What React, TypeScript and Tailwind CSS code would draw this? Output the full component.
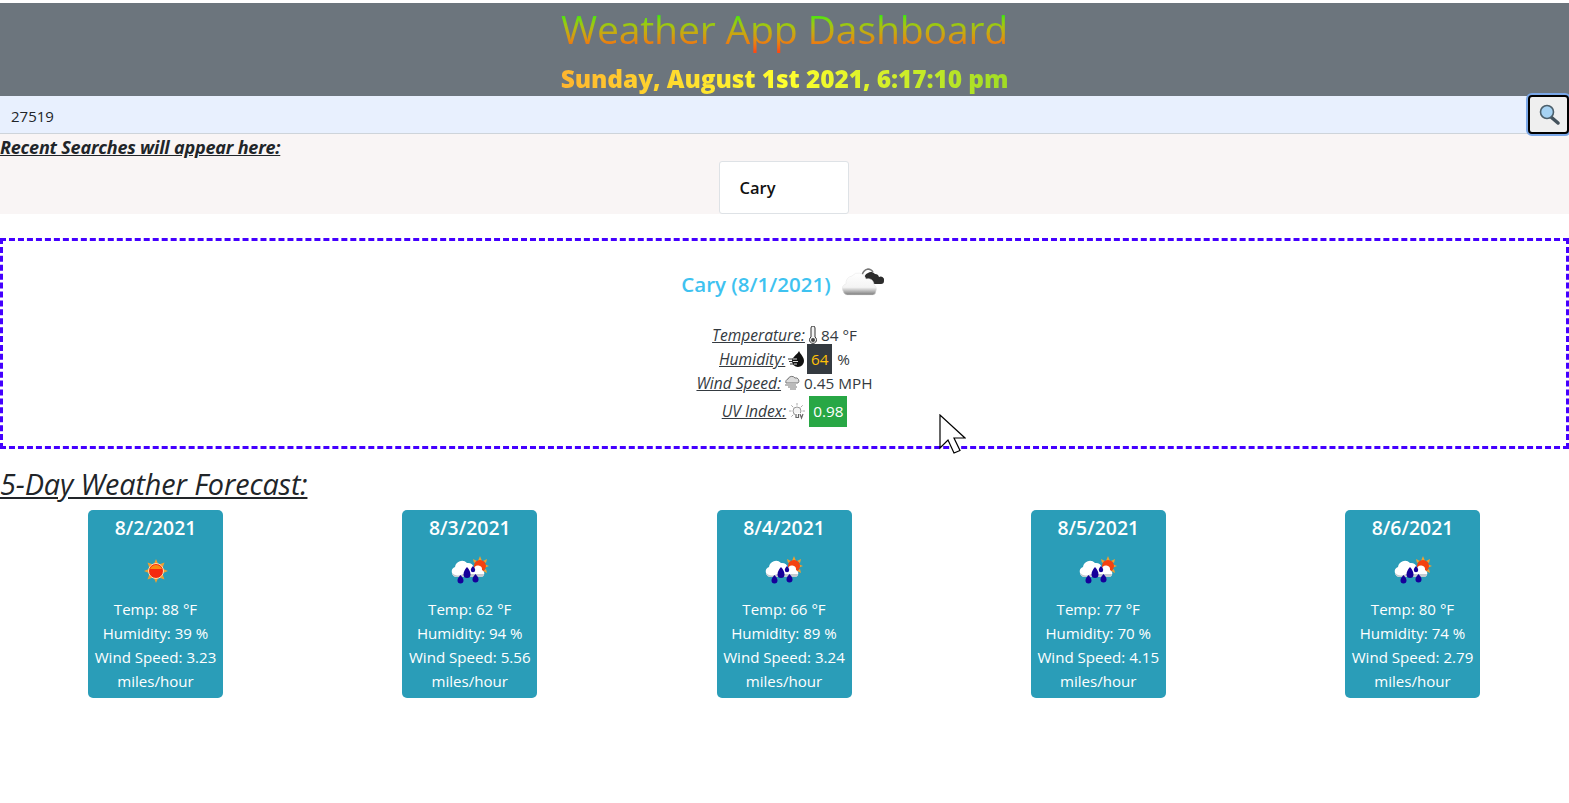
import React from 'react';

const SunIcon = () => (
    <svg width="26" height="26" viewBox="0 0 26 26">
        <g fill="#f0a030">
            <polygon points="13,1 15.5,7 10.5,7" />
            <polygon points="13,25 15.5,19 10.5,19" />
            <polygon points="1,13 7,10.5 7,15.5" />
            <polygon points="25,13 19,10.5 19,15.5" />
            <polygon points="4.5,4.5 10,6.5 6.5,10" />
            <polygon points="21.5,4.5 16,6.5 19.5,10" />
            <polygon points="4.5,21.5 10,19.5 6.5,16" />
            <polygon points="21.5,21.5 16,19.5 19.5,16" />
        </g>
        <circle cx="13" cy="13" r="7.5" fill="#f5290f" stroke="#ffe0b0" strokeWidth="1" />
        <path d="M7 11a6.5 6.5 0 0 1 12 0z" fill="#f98a12" />
    </svg>
);

const RainSunIcon = () => (
    <svg width="38" height="30" viewBox="0 0 38 30">
        <g fill="#f0a030">
            <polygon points="29,0 31,5 27,5" />
            <polygon points="38,10 33,12 33,8" />
            <polygon points="22,3 26,5 23,7" />
            <polygon points="36,3 32,5 35,7" />
            <polygon points="36,17 32,15 35,13" />
        </g>
        <circle cx="29" cy="10" r="6" fill="#f4410f" />
        <path d="M1 17a5 5 0 0 1 3-6 7 7 0 0 1 12-4 6 6 0 0 1 7 6 4 4 0 0 1 8 1 3.500 3.500 0 0 1 1 6 3 3 0 0 1-2 1H6a5 5 0 0 1-5-4z" fill="#ffffff" />
        <path d="M1 17a5 5 0 0 0 5 4h25a3 3 0 0 0 2-3H12a9 9 0 0 1-11-1z" fill="#c4cacf" />
        <g fill="#16009a">
            <path d="M16 11c2.500 3 3.500 5 3.500 7.500a3.500 3.500 0 0 1-7 0c0-2.500 1-4.500 3.500-7.500z" />
            <path d="M9.500 19c1.800 2 3 3.500 3 5.500a3 3 0 0 1-6 0c0-2 1.200-3.500 3-5.500z" />
            <path d="M24.500 18c1.800 2 3 3.500 3 5.500a3 3 0 0 1-6 0c0-2 1.200-3.500 3-5.500z" />
            <path d="M22 10c1.200 1.500 2.200 2.700 2.200 4a2.200 2.200 0 0 1-4.400 0c0-1.300 1-2.500 2.200-4z" />
        </g>
    </svg>
);

const CloudIcon = () => (
    <svg width="44" height="29" viewBox="0 0 44 29">
        <defs>
            <linearGradient id="cloudFill" x1="0" y1="0" x2="0" y2="1">
                <stop offset="0" stopColor="#ffffff" />
                <stop offset="0.65" stopColor="#f4f4f4" />
                <stop offset="1" stopColor="#7a7a7a" />
            </linearGradient>
        </defs>
        <path d="M20 8a8 8 0 0 1 6-7 6 6 0 0 1 5 3" fill="none" stroke="#777" strokeWidth="1.500" />
        <path d="M23 12a5 5 0 0 1 3-7 5 5 0 0 1 7 1 4 4 0 0 1 4 3 3.500 3.500 0 0 1 5 4 3 3 0 0 1-3 3H30a7 7 0 0 1-7-4z" fill="#2d2d2d" />
        <path d="M1 23a4.500 4.500 0 0 1 3-7 7 7 0 0 1 6-8 8 8 0 0 1 14 3 6 6 0 0 1 8 6 4.500 4.500 0 0 1 2 6 4 4 0 0 1-3 4H5a5 5 0 0 1-4-4z" fill="url(#cloudFill)" stroke="#e4e4e4" strokeWidth="0.500" />
    </svg>
);

const ThermoIcon = () => (
    <svg width="10" height="18" viewBox="0 0 10 18">
        <path d="M3 2a2 2 0 0 1 4 0v9a3.500 3.500 0 1 1-4 0z" fill="#f3f3f3" stroke="#333" strokeWidth="1" />
        <circle cx="5" cy="14" r="2" fill="#444" />
    </svg>
);

const DropIcon = () => (
    <svg width="17" height="16" viewBox="0 0 17 16">
        <path d="M11 0c2 4 5 6 5 10a6 6 0 0 1-12 0c0-4 5-6 7-10z" fill="#111" />
        <path d="M0 8h5M1 10.500h4M2 13h4" stroke="#333" strokeWidth="1" />
        <path d="M5 8h4M5 10.500h5M6 13h3" stroke="#ddd" strokeWidth="1" />
    </svg>
);

const WindIcon = () => (
    <svg width="16" height="16" viewBox="0 0 16 16">
        <path d="M2 8a3 3 0 0 1 2-4 4 4 0 0 1 7-1 3 3 0 0 1 3 5z" fill="#dcdcdc" stroke="#777" strokeWidth="1" />
        <path d="M1 10h11M4 12h9M6 14h6" stroke="#777" strokeWidth="1" />
    </svg>
);

const UvIcon = () => (
    <svg width="17" height="17" viewBox="0 0 17 17">
        <circle cx="8" cy="8" r="4" fill="#f4f4f4" stroke="#999" strokeWidth="1" />
        <path d="M8 0v2.500M8 13.500V16M0 8h2.500M13.500 8H16M2.300 2.300l2 2M13.700 2.300l-2 2M2.300 13.700l2-2" stroke="#aaa" strokeWidth="1" />
        <rect x="6" y="10" width="11" height="7" fill="#fff" />
        <path d="M7 11v3.500h2.500V11M11 11l1.500 4 1.500-4" stroke="#666" strokeWidth="1.200" fill="none" />
    </svg>
);

const SearchIcon = () => (
    <svg width="22" height="22" viewBox="0 0 22 22">
        <path d="M13 13l7 6" stroke="#44525c" strokeWidth="3.500" strokeLinecap="round" />
        <circle cx="9" cy="8" r="6.500" fill="#a6d2f2" stroke="#4c5f6b" strokeWidth="1.600" />
    </svg>
);

const CursorIcon = () => (
    <svg width="27" height="40" viewBox="0 0 27 40">
        <path d="M1 1v33l8-8 6 13 6-2.500-6-12.500h11z" fill="#ffffff" stroke="#000000" strokeWidth="1.200" strokeLinejoin="miter" />
    </svg>
);

const forecast = [
    { date: '8/2/2021', temp: 88, humidity: 39, wind: '3.23', sunny: true },
    { date: '8/3/2021', temp: 62, humidity: 94, wind: '5.56', sunny: false },
    { date: '8/4/2021', temp: 66, humidity: 89, wind: '3.24', sunny: false },
    { date: '8/5/2021', temp: 77, humidity: 70, wind: '4.15', sunny: false },
    { date: '8/6/2021', temp: 80, humidity: 74, wind: '2.79', sunny: false },
];

const App: React.FC = () => {
    return (
        <div className="min-h-[803px] bg-white font-['Open_Sans','Noto_Sans',sans-serif] text-[#212529] pt-[2px] border-t border-transparent">
            <header className="bg-[#6c757d] h-[93px] flex flex-col items-center">
                <h1 className="text-[39.200px] leading-[50px] mt-[1px] tracking-[-0.2px] bg-gradient-to-b from-[#30e810] from-[22%] to-[#ff4a10] to-[95%] bg-clip-text text-transparent">
                    Weather App Dashboard
                </h1>
                <div className="text-[24.500px] leading-[34px] mt-[8px] font-extrabold tracking-[-0.1px] bg-gradient-to-r from-[#ffb52e] via-[#ffff2e] to-[#a0dc24] bg-clip-text text-transparent">
                    Sunday, August 1st 2021, 6:17:10 pm
                </div>
            </header>

            <div className="flex h-[38px] bg-[#e8f0fe] border-b border-[#ced4da] relative">
                <div className="flex-1 flex items-center pl-[11px] pt-[3px] text-[15px]">27519</div>
                <button className="absolute right-0 top-[-1px] w-[41px] h-[39px] bg-[#efefef] border-2 border-black rounded-[4px] flex items-center justify-center shadow-[0_0_0_2px_#7aa7e8]">
                    <SearchIcon />
                </button>
            </div>

            <section className="bg-[#f9f5f5] h-[80px] flex flex-col">
                <h5 className="text-[18px] leading-[26px] font-bold italic underline tracking-[-0.2px]">
                    Recent Searches will appear here:
                </h5>
                <div className="flex justify-center mt-[1px] pr-[2px]">
                    <div className="w-[130px] h-[53px] bg-white border border-[#dee2e6] rounded-[3px] flex items-center pl-[20px] pt-[1px] font-semibold text-[16.500px] text-[#111]">
                        Cary
                    </div>
                </div>
            </section>

            <section className="mt-[24px] h-[211px] border-[3px] border-dashed border-[#4400ff] relative flex flex-col items-center">
                <div className="flex items-center mt-[26px] h-[34px] pr-[2px]">
                    <span className="text-[20.500px] font-semibold text-[#3ec2f0]">Cary (8/1/2021)</span>
                    <span className="ml-[11px] mb-[3px]">
                        <CloudIcon />
                    </span>
                </div>
                <div className="mt-[22px] flex flex-col items-center text-[15.300px] text-[#343a40]">
                    <div className="h-[24px] flex items-center">
                        <span className="italic underline text-[15.600px] mt-[2px]">Temperature:</span>
                        <span className="ml-[3px]"><ThermoIcon /></span>
                        <span className="ml-[3px]">84 °F</span>
                    </div>
                    <div className="h-[24px] flex items-center">
                        <span className="italic underline text-[15.600px] mt-[2px]">Humidity:</span>
                        <span className="ml-[3px]"><DropIcon /></span>
                        <span className="bg-[#343a40] text-[#ffc107] h-[30px] w-[25px] flex items-center justify-center ml-[2px]">64</span>
                        <span className="ml-[5px]">%</span>
                    </div>
                    <div className="h-[24px] flex items-center">
                        <span className="italic underline text-[15.600px] mt-[2px]">Wind Speed:</span>
                        <span className="ml-[3px]"><WindIcon /></span>
                        <span className="ml-[4px]">0.45 MPH</span>
                    </div>
                    <div className="h-[32px] flex items-center">
                        <span className="italic underline text-[15.600px] mt-[2px]">UV Index:</span>
                        <span className="ml-[3px]"><UvIcon /></span>
                        <span className="bg-[#28a745] text-white h-[31px] w-[38px] flex items-center justify-center ml-[3px]">0.98</span>
                    </div>
                </div>
                <div className="absolute left-[936px] top-[173px]">
                    <CursorIcon />
                </div>
            </section>

            <h3 className="mt-[16px] text-[28.800px] leading-[38px] italic underline font-medium tracking-[-0.1px]">
                5-Day Weather Forecast:
            </h3>

            <div className="flex justify-between mt-[7px] pl-[88px] pr-[89px]">
                {forecast.map((day) => (
                    <div key={day.date} className="w-[135px] h-[188px] bg-[#2a9db8] rounded-[5px] text-white flex flex-col items-center text-center text-[15.100px] leading-[24px]">
                        <div className="text-[19.400px] font-semibold leading-[24px] mt-[6px]">{day.date}</div>
                        <div className="h-[30px] mt-[16px] flex items-center justify-center">
                            {day.sunny ? <SunIcon /> : <RainSunIcon />}
                        </div>
                        <div className="mt-[11px]">
                            <div>Temp: {day.temp} °F</div>
                            <div>Humidity: {day.humidity} %</div>
                            <div className="whitespace-nowrap">Wind Speed: {day.wind}</div>
                            <div>miles/hour</div>
                        </div>
                    </div>
                ))}
            </div>
        </div>
    );
};

export default App;
